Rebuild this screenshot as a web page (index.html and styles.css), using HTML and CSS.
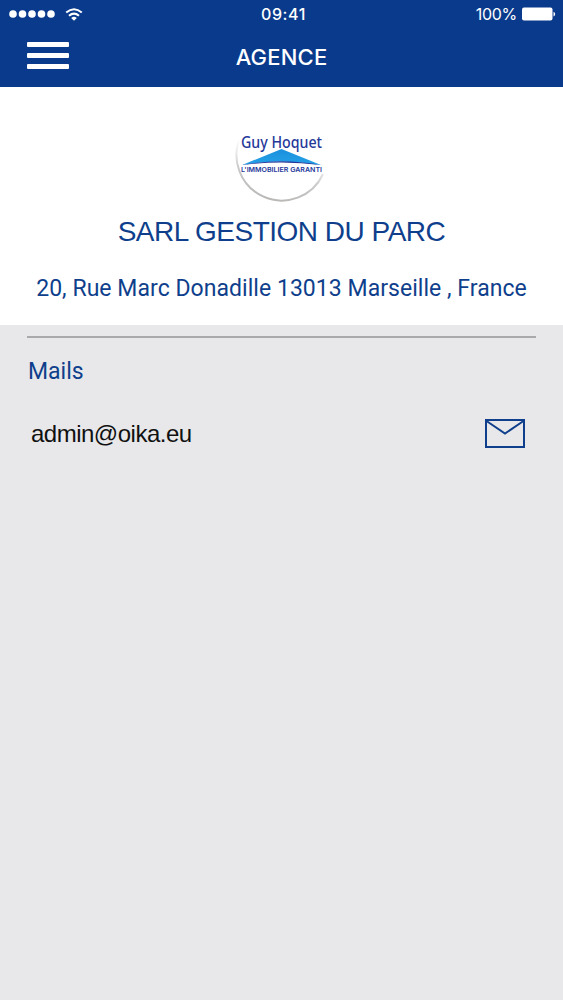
FILE: index.html
```html
<!DOCTYPE html>
<html lang="fr">

<head>
    <meta charset="UTF-8">
    <meta name="viewport" content="width=device-width, initial-scale=1.0">
    <title>Agence</title>
    <link rel="stylesheet" href="styles.css">
</head>

<body>
    <header class="header">
        <div class="status-bar">
            <div class="status-left">
                <svg class="signal" width="47" height="8" viewBox="0 0 47 8" fill="#fff">
                    <circle cx="4" cy="4" r="3.8" />
                    <circle cx="13.5" cy="4" r="3.8" />
                    <circle cx="23" cy="4" r="3.8" />
                    <circle cx="32.5" cy="4" r="3.8" />
                    <circle cx="42" cy="4" r="3.8" />
                </svg>
                <svg class="wifi" width="18" height="13" viewBox="0 0 18 13" fill="none" stroke="#fff" stroke-width="2">
                    <path d="M1.2 4.500Q9-2 16.800 4.500" />
                    <path d="M4 7.800Q9 3.400 14 7.800" />
                    <path d="M9 12.800L6.200 9.900Q9 7.400 11.800 9.900z" fill="#fff" stroke="none" />
                </svg>
            </div>
            <span class="time">09:41</span>
            <div class="status-right">
                <span class="percent">100%</span>
                <svg class="battery" width="34" height="14" viewBox="0 0 34 14" fill="#fff">
                    <rect x="0" y="0.5" width="30.5" height="13" rx="2" />
                    <path d="M31.5 4.8c2.2.8 2.2 3.8 0 4.6z" />
                </svg>
            </div>
        </div>
        <nav class="nav-bar">
            <button class="menu" aria-label="Menu"><span></span><span></span><span></span></button>
            <h1>AGENCE</h1>
        </nav>
    </header>

    <section class="agency">
        <svg class="logo" width="96" height="84" viewBox="0 0 96 84" role="img" aria-label="Guy Hoquet">
            <defs>
                <linearGradient id="ring" x1="0.3" y1="0" x2="0" y2="1">
                    <stop offset="0.1" stop-color="#ddd" stop-opacity="0" />
                    <stop offset="0.5" stop-color="#ccc" />
                    <stop offset="1" stop-color="#b4b2b0" />
                </linearGradient>
                <linearGradient id="roof" x1="0" y1="0" x2="0" y2="1">
                    <stop offset="0" stop-color="#1b8fdc" />
                    <stop offset="1" stop-color="#24a2e8" />
                </linearGradient>
            </defs>
            <path d="M6.600 13.500A44.500 44.500 0 1 0 89 51" fill="none" stroke="url(#ring)" stroke-width="2" />
            <path d="M8 42L47.500 26L87 42Q47 35 8 42z" fill="url(#roof)" />
            <path d="M8 42Q47 34.500 87 42Q47 37 8 42z" fill="#24389a" />
            <text class="logo-name" x="7" y="25" textLength="81" lengthAdjust="spacingAndGlyphs">Guy Hoquet</text>
            <text class="logo-motto" x="7" y="48.800" textLength="81" lengthAdjust="spacingAndGlyphs">L'IMMOBILIER GARANTI</text>
        </svg>
        <h2>SARL GESTION DU PARC</h2>
        <p class="address">20, Rue Marc Donadille 13013 Marseille , France</p>
    </section>

    <section class="contact">
        <h3>Mails</h3>
        <div class="mail-row">
            <span class="mail">admin@oika.eu</span>
            <svg class="envelope" width="40" height="29" viewBox="0 0 40 29" fill="none" stroke="#0f3f8c" stroke-width="2">
                <rect x="1" y="1" width="38" height="27" />
                <path d="M1.500 2L20 14.500L38.500 2" />
            </svg>
        </div>
    </section>
</body>

</html>
```
FILE: styles.css
```css
* {
    box-sizing: border-box;
}

body {
    margin: 0;
    min-height: 1000px;
    background-color: #e8e8ea;
    font-family: Roboto, "Liberation Sans", sans-serif;
}

h1, h2, h3, p {
    margin: 0;
    font-weight: 400;
}

.header {
    height: 87px;
    background-color: #0a3a8c;
    color: #fff;
    font-family: Inter, sans-serif;
}

.status-bar {
    display: grid;
    grid-template-columns: 1fr auto 1fr;
    align-items: center;
    height: 28px;
    padding: 0 7px 0 9px;
}

.status-left,
.status-right {
    display: flex;
    align-items: center;
}

.status-left {
    gap: 9px;
}

.status-right {
    justify-content: flex-end;
    gap: 5px;
}

.time {
    padding-left: 2px;
    font-size: 16px;
    font-weight: 500;
    letter-spacing: 0.6px;
}

.percent {
    font-size: 16px;
    letter-spacing: -0.3px;
}

.nav-bar {
    display: grid;
    grid-template-columns: 1fr auto 1fr;
    align-items: center;
    height: 58px;
    padding: 0 27px;
}

.menu {
    display: flex;
    flex-direction: column;
    gap: 6px;
    width: 42px;
    margin-bottom: 3px;
    padding: 0;
    border: 0;
    background: none;
}

.menu span {
    width: 42px;
    height: 5px;
    background-color: #fff;
    border-radius: 1px;
}

.nav-bar h1 {
    font-size: 22px;
    font-weight: 500;
    letter-spacing: 0.2px;
}

.agency {
    display: flex;
    flex-direction: column;
    align-items: center;
    height: 238px;
    padding-top: 36px;
    background-color: #fff;
    color: #0f3f8c;
}

.logo {
    display: block;
    overflow: visible;
}

.logo-name {
    font-family: "Noto Sans", sans-serif;
    font-size: 15.5px;
    font-weight: 500;
    fill: #24389a;
}

.logo-motto {
    font-family: Inter, sans-serif;
    font-size: 6.5px;
    font-weight: 600;
    fill: #24389a;
}

.agency h2 {
    margin-top: 8px;
    font-family: "Liberation Sans", sans-serif;
    font-size: 28px;
    letter-spacing: -0.5px;
    line-height: 34px;
    white-space: nowrap;
}

.address {
    margin-top: 25px;
    font-size: 23px;
    letter-spacing: 0.04px;
    line-height: 30px;
    white-space: nowrap;
}

.contact {
    margin: 11px 27px 0;
    border-top: 2px solid #a9a9ab;
}

.contact h3 {
    margin-top: 19px;
    padding-left: 1px;
    color: #0f3f8c;
    font-size: 23px;
    line-height: 30px;
}

.mail-row {
    display: flex;
    align-items: center;
    justify-content: space-between;
    margin-top: 31px;
    padding: 0 11px 0 4px;
}

.mail {
    padding-top: 1px;
    color: #111;
    font-family: "Liberation Sans", sans-serif;
    font-size: 24px;
    letter-spacing: -0.5px;
    line-height: 30px;
}
```
